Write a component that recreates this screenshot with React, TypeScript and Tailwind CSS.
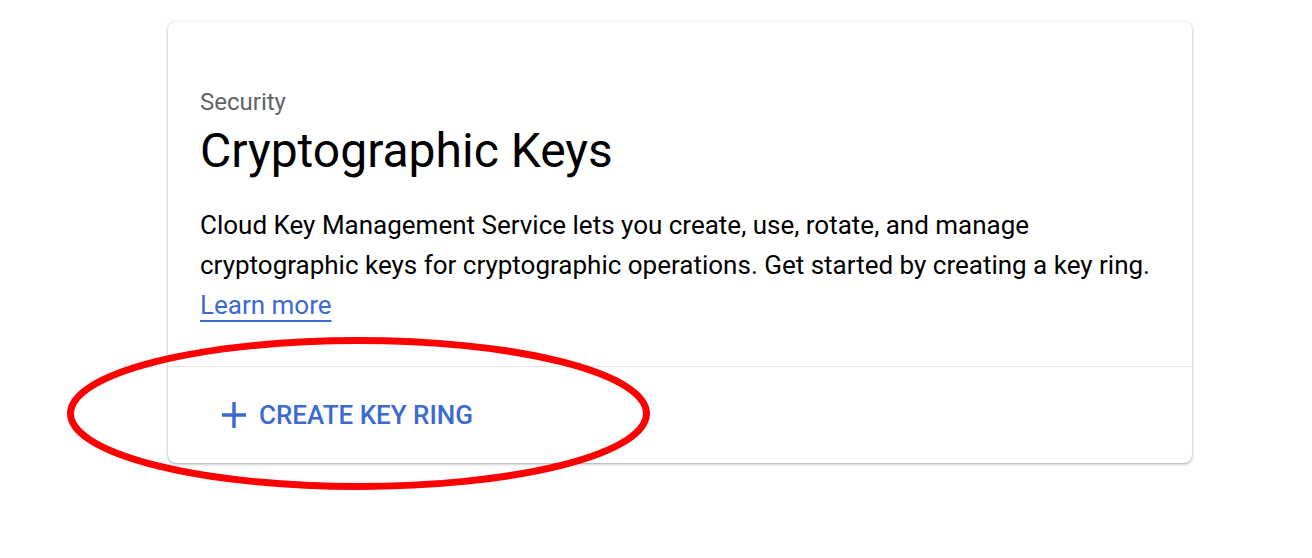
import React from "react";

export default function App() {
  return (
    <div className="relative w-[1312px] h-[558px] bg-white overflow-hidden" style={{ fontFamily: "Roboto, 'Liberation Sans', sans-serif" }}>
      <div className="pt-[22px] pl-[168px]">
        <div className="w-[1024px] h-[441px] rounded-[8px] bg-white shadow-[0_1px_2px_0_rgba(60,64,67,0.3),0_1px_3px_1px_rgba(60,64,67,0.15)] flex flex-col">
          <div className="px-[32px] pt-[64px] pb-[41px] border-b border-[#e6e6e6]">
            <div className="text-[24px] leading-[32px] text-[#5f6368]">Security</div>
            <h1 className="mt-[5px] text-[48px] leading-[56px] text-[#000000] font-normal">Cryptographic Keys</h1>
            <p className="mt-[26px] text-[26px] leading-[40px] text-[#000000]">
              Cloud Key Management Service lets you create, use, rotate, and manage
              <br />
              cryptographic keys for cryptographic operations. Get started by creating a key ring.
              <br />
              <a className="text-[#3b6ad2] underline underline-offset-[6px] decoration-[2px]" href="#">Learn more</a>
            </p>
          </div>
          <div className="flex-1 flex items-center pl-[54px]">
            <button className="flex items-center gap-[13px] text-[#3b6ad2] font-medium text-[26px]">
              <svg width="24" height="26" viewBox="0 0 24 26">
                <path d="M12 0v26M0 13h24" stroke="#3b6ad2" strokeWidth="3.4" />
              </svg>
              CREATE KEY RING
            </button>
          </div>
        </div>
      </div>
      <svg className="absolute left-0 top-0 pointer-events-none" width="1312" height="558">
        <ellipse cx="358.5" cy="413.5" rx="288" ry="73" fill="none" stroke="#ff0000" strokeWidth="7" />
      </svg>
    </div>
  );
}
